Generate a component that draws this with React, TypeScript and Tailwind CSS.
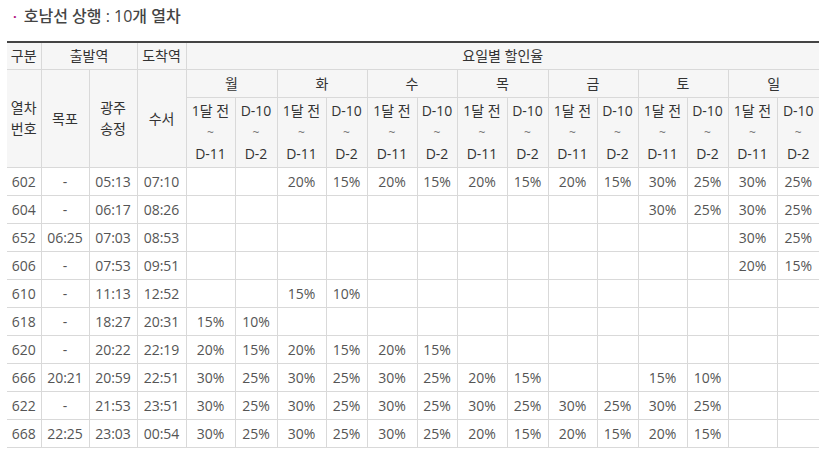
import React from "react";

type Pair = [string, string];

interface TrainRow {
  no: string;
  mokpo: string;
  gwangju: string;
  suseo: string;
  rates: Pair[];
}

const E: Pair = ["", ""];

const rows: TrainRow[] = [
  { no: "602", mokpo: "-", gwangju: "05:13", suseo: "07:10", rates: [E, ["20%", "15%"], ["20%", "15%"], ["20%", "15%"], ["20%", "15%"], ["30%", "25%"], ["30%", "25%"]] },
  { no: "604", mokpo: "-", gwangju: "06:17", suseo: "08:26", rates: [E, E, E, E, E, ["30%", "25%"], ["30%", "25%"]] },
  { no: "652", mokpo: "06:25", gwangju: "07:03", suseo: "08:53", rates: [E, E, E, E, E, E, ["30%", "25%"]] },
  { no: "606", mokpo: "-", gwangju: "07:53", suseo: "09:51", rates: [E, E, E, E, E, E, ["20%", "15%"]] },
  { no: "610", mokpo: "-", gwangju: "11:13", suseo: "12:52", rates: [E, ["15%", "10%"], E, E, E, E, E] },
  { no: "618", mokpo: "-", gwangju: "18:27", suseo: "20:31", rates: [["15%", "10%"], E, E, E, E, E, E] },
  { no: "620", mokpo: "-", gwangju: "20:22", suseo: "22:19", rates: [["20%", "15%"], ["20%", "15%"], ["20%", "15%"], E, E, E, E] },
  { no: "666", mokpo: "20:21", gwangju: "20:59", suseo: "22:51", rates: [["30%", "25%"], ["30%", "25%"], ["30%", "25%"], ["20%", "15%"], E, ["15%", "10%"], E] },
  { no: "622", mokpo: "-", gwangju: "21:53", suseo: "23:51", rates: [["30%", "25%"], ["30%", "25%"], ["30%", "25%"], ["30%", "25%"], ["30%", "25%"], ["30%", "25%"], E] },
  { no: "668", mokpo: "22:25", gwangju: "23:03", suseo: "00:54", rates: [["30%", "25%"], ["30%", "25%"], ["30%", "25%"], ["20%", "15%"], ["20%", "15%"], ["20%", "15%"], E] },
];

const days = ["월", "화", "수", "목", "금", "토", "일"];

// 1달 전 / D-10 column pairs
const pairWidths: Pair[] = [
  ["49px", "42px"],
  ["49px", "41px"],
  ["50px", "40px"],
  ["50px", "41px"],
  ["49px", "41px"],
  ["49px", "41px"],
  ["49px", "42px"],
];

const th = "border border-[#d9d9d9] bg-[#f6f6f6] font-normal text-[#333] text-center p-0";
const td = "border border-[#d9d9d9] text-[#555] text-center p-0 h-[28px]";

export default function App() {
  return (
    <div className="w-[829px] h-[457px] bg-white overflow-hidden" style={{ fontFamily: '"Open Sans", "Noto Sans CJK KR", sans-serif' }}>
      <div className="pt-[6px] pl-[13px] leading-[20px] text-[16px] font-medium text-[#444] flex items-center">
        <span className="text-[#b0117f] mr-[7px] text-[13px] font-bold">·</span>
        <span>호남선 상행 : 10개 열차</span>
      </div>

      <table className="ml-[7px] mt-[15px] w-[812px] table-fixed border-collapse border-t-2 border-t-[#444] border-l-0 border-r-0 text-[14px] leading-[21px] [&_tr>*:first-child]:border-l-0 [&_tr>*:last-child]:border-r-0">
        <colgroup>
          <col style={{ width: "34px" }} />
          <col style={{ width: "48px" }} />
          <col style={{ width: "48px" }} />
          <col style={{ width: "49px" }} />
          {pairWidths.map(([a, b], i) => (
            <React.Fragment key={i}>
              <col style={{ width: a }} />
              <col style={{ width: b }} />
            </React.Fragment>
          ))}
        </colgroup>
        <thead>
          <tr className="h-[27px]">
            <th className={`${th} border-t-[#444]`}>구분</th>
            <th className={`${th} border-t-[#444]`} colSpan={2}>출발역</th>
            <th className={`${th} border-t-[#444]`}>도착역</th>
            <th className={`${th} border-t-[#444]`} colSpan={14}>요일별 할인율</th>
          </tr>
          <tr className="h-[28px]">
            <th className={th} rowSpan={2}>열차<br />번호</th>
            <th className={th} rowSpan={2}>목포</th>
            <th className={th} rowSpan={2}>광주<br />송정</th>
            <th className={th} rowSpan={2}>수서</th>
            {days.map((d) => (
              <th key={d} className={th} colSpan={2}>{d}</th>
            ))}
          </tr>
          <tr className="h-[70px]">
            {days.map((d) => (
              <React.Fragment key={d}>
                <th className={th}>
                  1달 전<br /><span className="text-[12px] text-[#777]">~</span><br />D-11
                </th>
                <th className={th}>
                  D-10<br /><span className="text-[12px] text-[#777]">~</span><br />D-2
                </th>
              </React.Fragment>
            ))}
          </tr>
        </thead>
        <tbody>
          {rows.map((r) => (
            <tr key={r.no}>
              <td className={td}>{r.no}</td>
              <td className={td}>{r.mokpo}</td>
              <td className={td}>{r.gwangju}</td>
              <td className={td}>{r.suseo}</td>
              {r.rates.map(([a, b], i) => (
                <React.Fragment key={i}>
                  <td className={td}>{a}</td>
                  <td className={td}>{b}</td>
                </React.Fragment>
              ))}
            </tr>
          ))}
        </tbody>
      </table>
    </div>
  );
}
